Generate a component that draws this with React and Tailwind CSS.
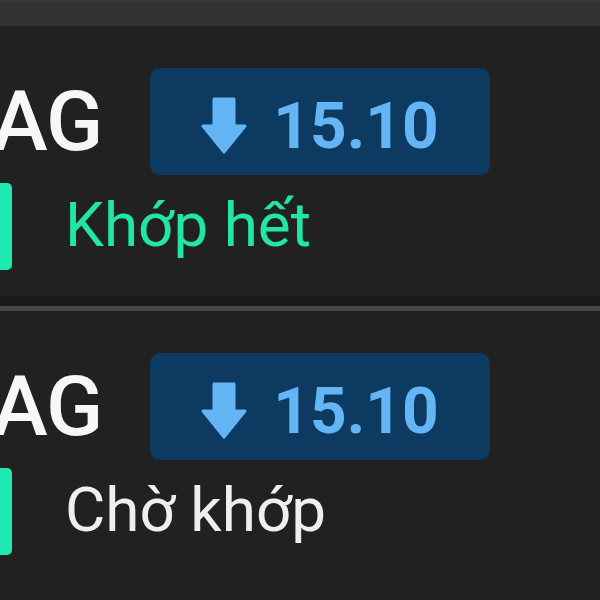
const orders = [
  { symbol: "AG", price: "15.10", status: "Khớp hết", matched: true },
  { symbol: "AG", price: "15.10", status: "Chờ khớp", matched: false },
];

const ArrowDown = () => (
  <svg width="46" height="58" viewBox="0 0 46 58" className="shrink-0 mt-[8px]">
    <polygon
      points="13,2 33,2 33,29 44,29 23,55 2,29 13,29"
      fill="#64b5f6"
      stroke="#64b5f6"
      strokeWidth="3"
      strokeLinejoin="round"
    />
  </svg>
);

const OrderRow = ({ order, divider }) => (
  <div className="flex flex-col">
    <div className="h-[270px] pt-[42px]">
      <div className="flex items-center">
        <div className="w-[150px] shrink-0 overflow-hidden">
          <span className="block -ml-[8px] text-[84px] leading-none font-medium text-[#f7f7f7] tracking-[-1px]">
            {order.symbol}
          </span>
        </div>
        <div className="w-[340px] h-[107px] rounded-[10px] bg-[#0c3a60] flex items-center justify-center gap-[26px]">
          <ArrowDown />
          <span className="text-[64px] leading-none font-bold text-[#64b5f6] mt-[10px]">
            {order.price}
          </span>
        </div>
      </div>
      <div className="flex items-center mt-[8px] h-[87px]">
        <div className="w-[12px] h-full rounded-r-[5px] bg-[#1de9b0]" />
        <span
          className={
            order.matched
              ? "ml-[53px] -mt-[4px] text-[62px] leading-none text-[#22e6a6]"
              : "ml-[53px] -mt-[4px] text-[62px] leading-none text-[#efefef]"
          }
        >
          {order.status}
        </span>
      </div>
    </div>
    {divider && (
      <>
        <div className="h-[10px] bg-[#1b1b1b]" />
        <div className="h-[5px] bg-[#474747]" />
      </>
    )}
  </div>
);

export default function App() {
  return (
    <div
      className="w-[600px] h-[600px] overflow-hidden bg-[#212121]"
      style={{ fontFamily: "Roboto, 'Noto Sans', sans-serif" }}
    >
      <div className="h-[26px] bg-[#313131] border-t-[3px] border-[#363636]" />
      {orders.map((o, i) => (
        <OrderRow key={i} order={o} divider={i === 0} />
      ))}
    </div>
  );
}
